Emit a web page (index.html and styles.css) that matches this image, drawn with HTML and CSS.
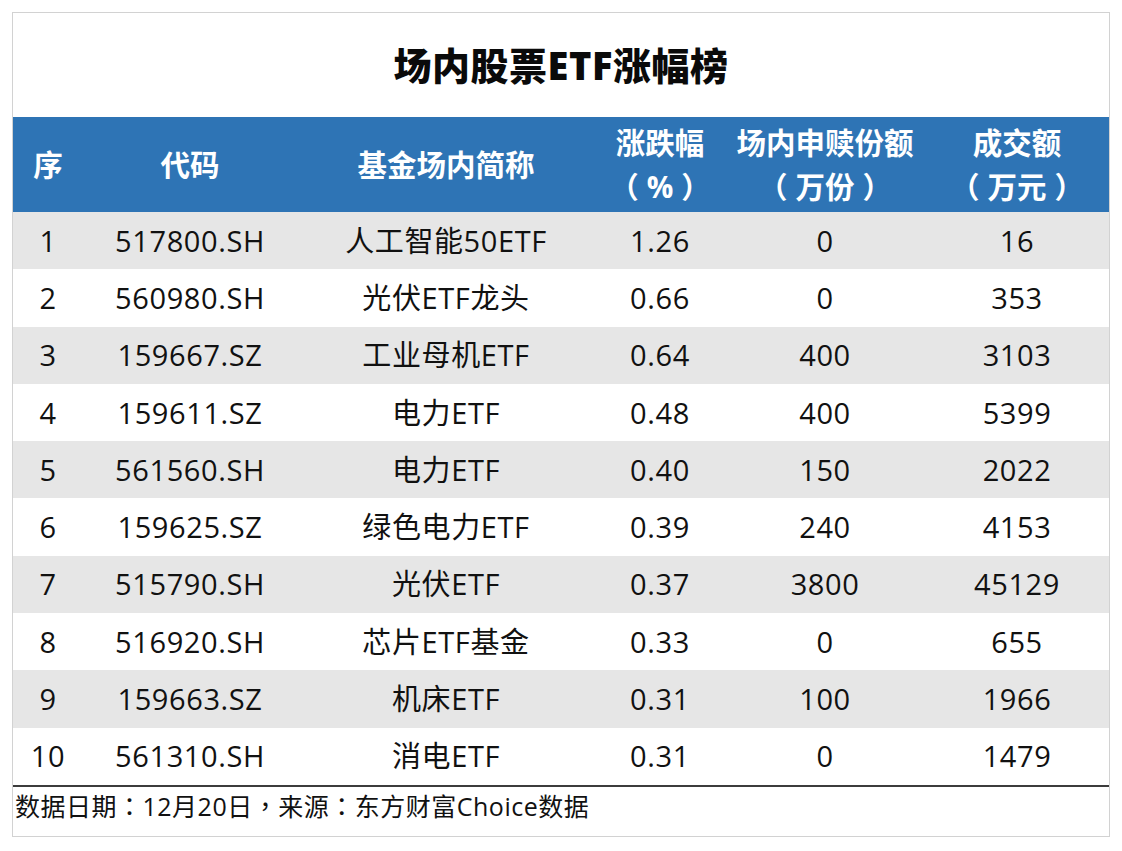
FILE: index.html
```html
<!DOCTYPE html>
<html lang="zh-CN">
<head>
<meta charset="utf-8">
<title>场内股票ETF涨幅榜</title>
<link rel="stylesheet" href="styles.css">
</head>
<body>
<div class="card">
  <h1 class="title">场内股票ETF涨幅榜</h1>
  <table class="rank">
    <colgroup>
      <col class="c1"><col class="c2"><col class="c3"><col class="c4"><col class="c5"><col class="c6">
    </colgroup>
    <thead>
      <tr>
        <th>序</th>
        <th>代码</th>
        <th>基金场内简称</th>
        <th>涨跌幅<br><span class="p pl" lang="zh-TW">（</span>%<span class="p pr" lang="zh-TW">）</span></th>
        <th>场内申赎份额<br><span class="p pl" lang="zh-TW">（</span>万份<span class="p pr" lang="zh-TW">）</span></th>
        <th>成交额<br><span class="p pl" lang="zh-TW">（</span>万元<span class="p pr" lang="zh-TW">）</span></th>
      </tr>
    </thead>
    <tbody>
      <tr><td>1</td><td>517800.SH</td><td>人工智能50ETF</td><td>1.26</td><td>0</td><td>16</td></tr>
      <tr><td>2</td><td>560980.SH</td><td>光伏ETF龙头</td><td>0.66</td><td>0</td><td>353</td></tr>
      <tr><td>3</td><td>159667.SZ</td><td>工业母机ETF</td><td>0.64</td><td>400</td><td>3103</td></tr>
      <tr><td>4</td><td>159611.SZ</td><td>电力ETF</td><td>0.48</td><td>400</td><td>5399</td></tr>
      <tr><td>5</td><td>561560.SH</td><td>电力ETF</td><td>0.40</td><td>150</td><td>2022</td></tr>
      <tr><td>6</td><td>159625.SZ</td><td>绿色电力ETF</td><td>0.39</td><td>240</td><td>4153</td></tr>
      <tr><td>7</td><td>515790.SH</td><td>光伏ETF</td><td>0.37</td><td>3800</td><td>45129</td></tr>
      <tr><td>8</td><td>516920.SH</td><td>芯片ETF基金</td><td>0.33</td><td>0</td><td>655</td></tr>
      <tr><td>9</td><td>159663.SZ</td><td>机床ETF</td><td>0.31</td><td>100</td><td>1966</td></tr>
      <tr><td>10</td><td>561310.SH</td><td>消电ETF</td><td>0.31</td><td>0</td><td>1479</td></tr>
    </tbody>
  </table>
  <div class="footer">数据日期<span class="p" lang="zh-TW">：</span>12月20日<span class="p" lang="zh-TW">，</span>来源<span class="p" lang="zh-TW">：</span>东方财富Choice数据</div>
</div>
</body>
</html>
```
FILE: styles.css
```css
html, body {
  margin: 0;
  padding: 0;
  background: #ffffff;
}

body {
  font-family: "Open Sans", "Noto Sans CJK SC", sans-serif;
  color: #111111;
}

.p {
  font-family: "Noto Sans CJK TC", "Noto Sans CJK SC", sans-serif;
}

.pl {
  margin-right: 8px;
}

.pr {
  margin-left: 8px;
}

.card {
  margin: 12px 0 0 12px;
  width: 1096px;
  border: 1px solid #d2d2d2;
  background: #ffffff;
}

.title {
  margin: 0;
  height: 104px;
  line-height: 104px;
  text-align: center;
  font-size: 38px;
  font-weight: 800;
  color: #0a0a0a;
  letter-spacing: 0.5px;
}

.rank {
  width: 1096px;
  table-layout: fixed;
  border-collapse: collapse;
}

.c1 { width: 70px; }
.c2 { width: 214px; }
.c3 { width: 298px; }
.c4 { width: 130px; }
.c5 { width: 200px; }
.c6 { width: 184px; }

.rank th {
  height: 95px;
  padding: 0;
  background: #2e74b5;
  color: #ffffff;
  font-size: 29.5px;
  font-weight: 700;
  line-height: 43px;
  text-align: center;
  vertical-align: middle;
}

.rank td {
  height: 57.3px;
  padding: 0;
  font-size: 29px;
  line-height: 34px;
  text-align: center;
  vertical-align: middle;
  letter-spacing: 0.6px;
}

.rank tbody tr:nth-child(odd) td {
  background: #e6e6e6;
}

.footer {
  border-top: 2px solid #3c3c3c;
  height: 51px;
  padding: 2px 0 0 2px;
  box-sizing: border-box;
  font-size: 25px;
  line-height: 32px;
  letter-spacing: 0.5px;
  color: #111111;
}
```
